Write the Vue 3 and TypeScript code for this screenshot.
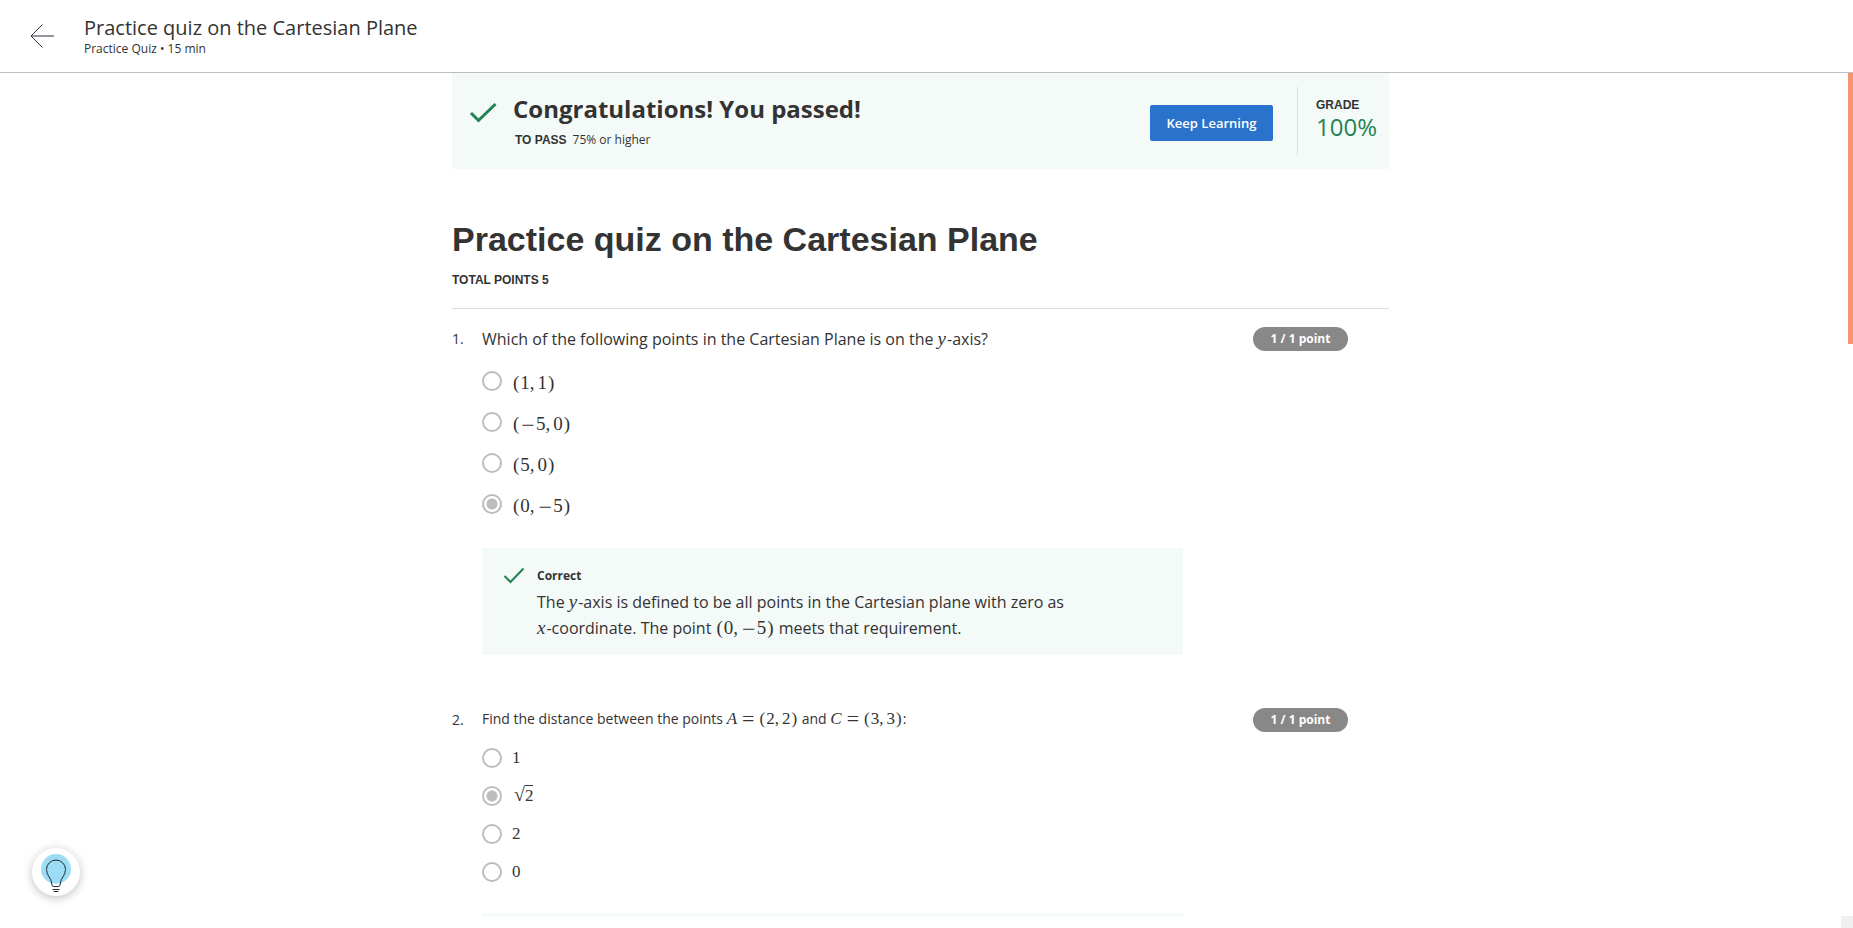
<script setup lang="ts">
import { h, ref, type FunctionalComponent } from 'vue'

interface Question {
  id: number
  size: 'large' | 'small'
  options: string[]
}

const questions: Question[] = [
  { id: 1, size: 'large', options: ['(1,1)', '(−5,0)', '(5,0)', '(0,−5)'] },
  { id: 2, size: 'small', options: ['1', '√2', '2', '0'] },
]

const answers = ref<Record<number, string>>({ 1: '(0,−5)', 2: '√2' })

const kinds: Record<string, string> = {
  '(': 'paren',
  ')': 'paren',
  ',': 'comma',
  '−': 'minus',
  '=': 'equals',
}

// Typesets a short formula: letters are italic variables, √ covers the digit after it.
const Formula: FunctionalComponent<{ tex: string }> = (props) => {
  if (props.tex.startsWith('√')) {
    return h('span', { class: 'math' }, [
      h('span', { class: 'math-root' }, '√'),
      h('span', { class: 'math-radicand' }, props.tex.slice(1)),
    ])
  }
  return h(
    'span',
    { class: 'math' },
    [...props.tex].map((ch) =>
      h('span', { class: /[a-zA-Z]/.test(ch) ? 'math-var' : 'math-' + (kinds[ch] ?? 'num') }, ch),
    ),
  )
}
Formula.props = ['tex']
</script>

<template>
  <div class="page">
    <header class="topbar">
      <button class="back" type="button" aria-label="Back">
        <svg width="24" height="24" viewBox="0 0 24 24" fill="none" stroke="#2b2f3a">
          <path d="M1 12H24M12.500 .5L1 12L12.500 23.500" />
        </svg>
      </button>
      <div>
        <div class="topbar-title">Practice quiz on the Cartesian Plane</div>
        <div class="topbar-sub">Practice Quiz • 15 min</div>
      </div>
    </header>

    <main class="content">
      <div class="column">
        <section class="banner">
          <svg class="banner-check" width="28" height="22" viewBox="0 0 28 22" fill="none" stroke="#1f8354" stroke-width="3">
            <path d="M2 11L9.500 18.500L26.500 2" />
          </svg>
          <div class="banner-text">
            <h2>Congratulations! You passed!</h2>
            <p><strong class="caps">TO PASS</strong><span>75% or higher</span></p>
          </div>
          <button class="primary" type="button">Keep Learning</button>
          <div class="grade">
            <strong class="caps">GRADE</strong>
            <span class="grade-value">100%</span>
          </div>
        </section>

        <h1>Practice quiz on the Cartesian Plane</h1>
        <p class="total caps">TOTAL POINTS 5</p>

        <section v-for="q in questions" :key="q.id" class="question" :class="q.size">
          <div class="number">{{ q.id }}.</div>
          <div class="body">
            <div class="prompt-row">
              <p v-if="q.id === 1" :id="'prompt-' + q.id" class="prompt">
                Which of the following points in the Cartesian Plane is on the <Formula tex="y" />-axis?
              </p>
              <p v-else :id="'prompt-' + q.id" class="prompt">
                Find the distance between the points <Formula tex="A=(2,2)" /> and <Formula tex="C=(3,3)" />:
              </p>
              <span class="points">1 / 1 point</span>
            </div>
            <div class="options" role="radiogroup" :aria-labelledby="'prompt-' + q.id">
              <label v-for="o in q.options" :key="o" class="option">
                <input v-model="answers[q.id]" type="radio" :name="'question-' + q.id" :value="o" />
                <Formula :tex="o" />
              </label>
            </div>
            <div v-if="q.id === 1" class="feedback">
              <svg width="22" height="18" viewBox="0 0 22 18" fill="none" stroke="#1f8354" stroke-width="2">
                <path d="M1.500 9L7.500 15L20.500 1.500" />
              </svg>
              <div class="feedback-text">
                <strong>Correct</strong>
                <p>
                  The <Formula tex="y" />-axis is defined to be all points in the Cartesian plane with zero as
                  <span class="keep"><Formula tex="x" />-coordinate.</span> The point
                  <Formula tex="(0,−5)" /> meets that requirement.
                </p>
              </div>
            </div>
            <div v-else class="feedback-edge"></div>
          </div>
        </section>
      </div>
    </main>

    <div class="scroll-thumb"></div>
    <div class="scroll-corner"></div>
    <button class="hint" type="button" aria-label="Hint">
      <svg width="48" height="48" viewBox="0 0 48 48" fill="none">
        <circle cx="24" cy="21" r="15" fill="#9ddcf5" />
        <path
          d="M19.500 35C19.500 30 14.500 28 14.500 21.500A9.500 9.500 0 0 1 33.500 21.500C33.500 28 28.500 30 28.500 35Q28.500 38.500 26 38.500H22Q19.500 38.500 19.500 35Z"
          stroke="#1f2a33"
        />
        <path d="M20.500 41.500H27.500M21.500 43.500H26.500" stroke="#1f2a33" />
      </svg>
    </button>
  </div>
</template>

<style>
html,
body {
  margin: 0;
  background: #fff;
}

.math {
  font-family: 'Liberation Serif', serif;
  white-space: nowrap;
}

.math-var {
  font-style: italic;
  margin-right: 1px;
}

.math-paren {
  margin: 0 1px;
}

.math-comma {
  margin-right: 3px;
}

.math-minus {
  font-size: 24px;
  line-height: 1px;
  vertical-align: -3px;
  margin: 0 1px;
}

.math-equals {
  font-size: 22px;
  line-height: 1px;
  vertical-align: -2px;
  margin: 0 4px;
}

.math-root {
  font-size: 20px;
  line-height: 1px;
  margin-left: 2px;
}

.math-radicand {
  border-top: 1px solid #333;
}
</style>

<style scoped>
.page {
  position: relative;
  height: 100vh;
  overflow: hidden;
  display: flex;
  flex-direction: column;
  font-family: 'Open Sans', sans-serif;
  font-size: 14px;
  color: #333;
}

h1,
h2,
p {
  margin: 0;
}

button {
  font-family: inherit;
  border: 0;
  padding: 0;
  cursor: pointer;
}

.caps {
  font-family: 'Liberation Sans', Arial, sans-serif;
  font-size: 12px;
  font-weight: 700;
}

.topbar {
  flex: none;
  display: flex;
  align-items: center;
  gap: 30px;
  height: 72px;
  padding: 0 30px;
  border-bottom: 1px solid #bdbdbd;
}

.back {
  display: flex;
  background: none;
}

.topbar-title {
  padding-top: 2px;
  font-size: 20px;
  line-height: 24px;
}

.topbar-sub {
  font-size: 12px;
  line-height: 18px;
}

.content {
  flex: 1;
  min-height: 0;
  overflow: hidden;
  padding-right: 12px;
}

.column {
  max-width: 937px;
  margin: 0 auto;
}

.banner {
  display: flex;
  align-items: center;
  box-sizing: border-box;
  height: 96px;
  padding: 4px 12px 0 17px;
  background: #f3faf8;
}

.banner-check {
  margin-bottom: 20px;
}

.banner-text {
  flex: 1;
  margin-left: 16px;
}

.banner h2 {
  font-size: 24px;
  line-height: 32px;
}

.banner p {
  display: flex;
  gap: 6px;
  padding: 5px 0 3px 2px;
  font-size: 12px;
  line-height: 20px;
}

.primary {
  width: 123px;
  height: 36px;
  border-radius: 2px;
  background: #2a73cc;
  color: #fff;
  font-size: 13px;
  font-weight: 600;
}

.grade {
  display: flex;
  flex-direction: column;
  box-sizing: border-box;
  height: 68px;
  margin: 0 0 4px 24px;
  padding: 10px 0 0 18px;
  border-left: 1px solid #ddd;
}

.grade .caps {
  line-height: 16px;
}

.grade-value {
  font-size: 24px;
  line-height: 28px;
  color: #1f8354;
}

h1 {
  margin-top: 48px;
  font-family: 'Liberation Sans', Arial, sans-serif;
  font-size: 34px;
  line-height: 44px;
}

.total {
  padding: 11px 0 19px;
  line-height: 17px;
  border-bottom: 1px solid #ddd;
}

.question {
  display: flex;
}

.question.large {
  padding-top: 18px;
}

.question.small {
  padding-top: 53px;
}

.number {
  width: 30px;
  line-height: 24px;
}

.body {
  flex: 1;
}

.prompt-row {
  display: flex;
  justify-content: space-between;
  align-items: center;
  height: 24px;
  padding-right: 41px;
}

.large .prompt {
  font-size: 16px;
}

.prompt {
  line-height: 24px;
}

.small .prompt {
  padding-bottom: 3px;
}

.points {
  width: 95px;
  border-radius: 12px;
  background: #888;
  color: #fff;
  font-size: 12px;
  font-weight: 700;
  line-height: 24px;
  text-align: center;
}

.large .math {
  font-size: 19px;
}

.small .math {
  font-size: 17px;
}

.options {
  display: flex;
  flex-direction: column;
}

.large .options {
  padding: 9px 0 24px;
}

.small .options {
  padding: 7px 0 22px;
}

.option {
  display: flex;
  align-items: center;
  align-self: flex-start;
  gap: 10px;
}

.large .option {
  height: 41px;
}

.large .option .math {
  padding-top: 4px;
}

.small .option {
  height: 38px;
}

.option input {
  appearance: none;
  box-sizing: border-box;
  width: 20px;
  height: 20px;
  margin: 0;
  border: 2px solid #bdbdbd;
  border-radius: 50%;
}

.option input:checked {
  background: radial-gradient(circle, #bdbdbd 5px, transparent 6px);
}

.feedback {
  display: flex;
  gap: 12px;
  max-width: 701px;
  box-sizing: border-box;
  padding: 18px 100px 14px 21px;
  background: #f3faf8;
}

.feedback svg {
  flex: none;
  margin-top: 1px;
}

.feedback strong {
  display: block;
  font-size: 12px;
  line-height: 20px;
  padding-bottom: 3px;
}

.feedback p {
  font-size: 16px;
  line-height: 26px;
}

.feedback .math {
  line-height: 1px;
}

.keep {
  white-space: nowrap;
}

.feedback-edge {
  max-width: 701px;
  height: 3px;
  background: #f3faf8;
}

.scroll-thumb {
  position: absolute;
  top: 73px;
  right: 0;
  width: 5px;
  height: 271px;
  background: #f79470;
}

.scroll-corner {
  position: absolute;
  right: 0;
  bottom: 0;
  width: 12px;
  height: 12px;
  background: #f1f0ef;
}

.hint {
  position: absolute;
  left: 32px;
  bottom: 32px;
  width: 48px;
  height: 48px;
  border-radius: 50%;
  background: #fff;
  box-shadow: 0 2px 10px rgba(0, 0, 0, 0.25);
}
</style>
